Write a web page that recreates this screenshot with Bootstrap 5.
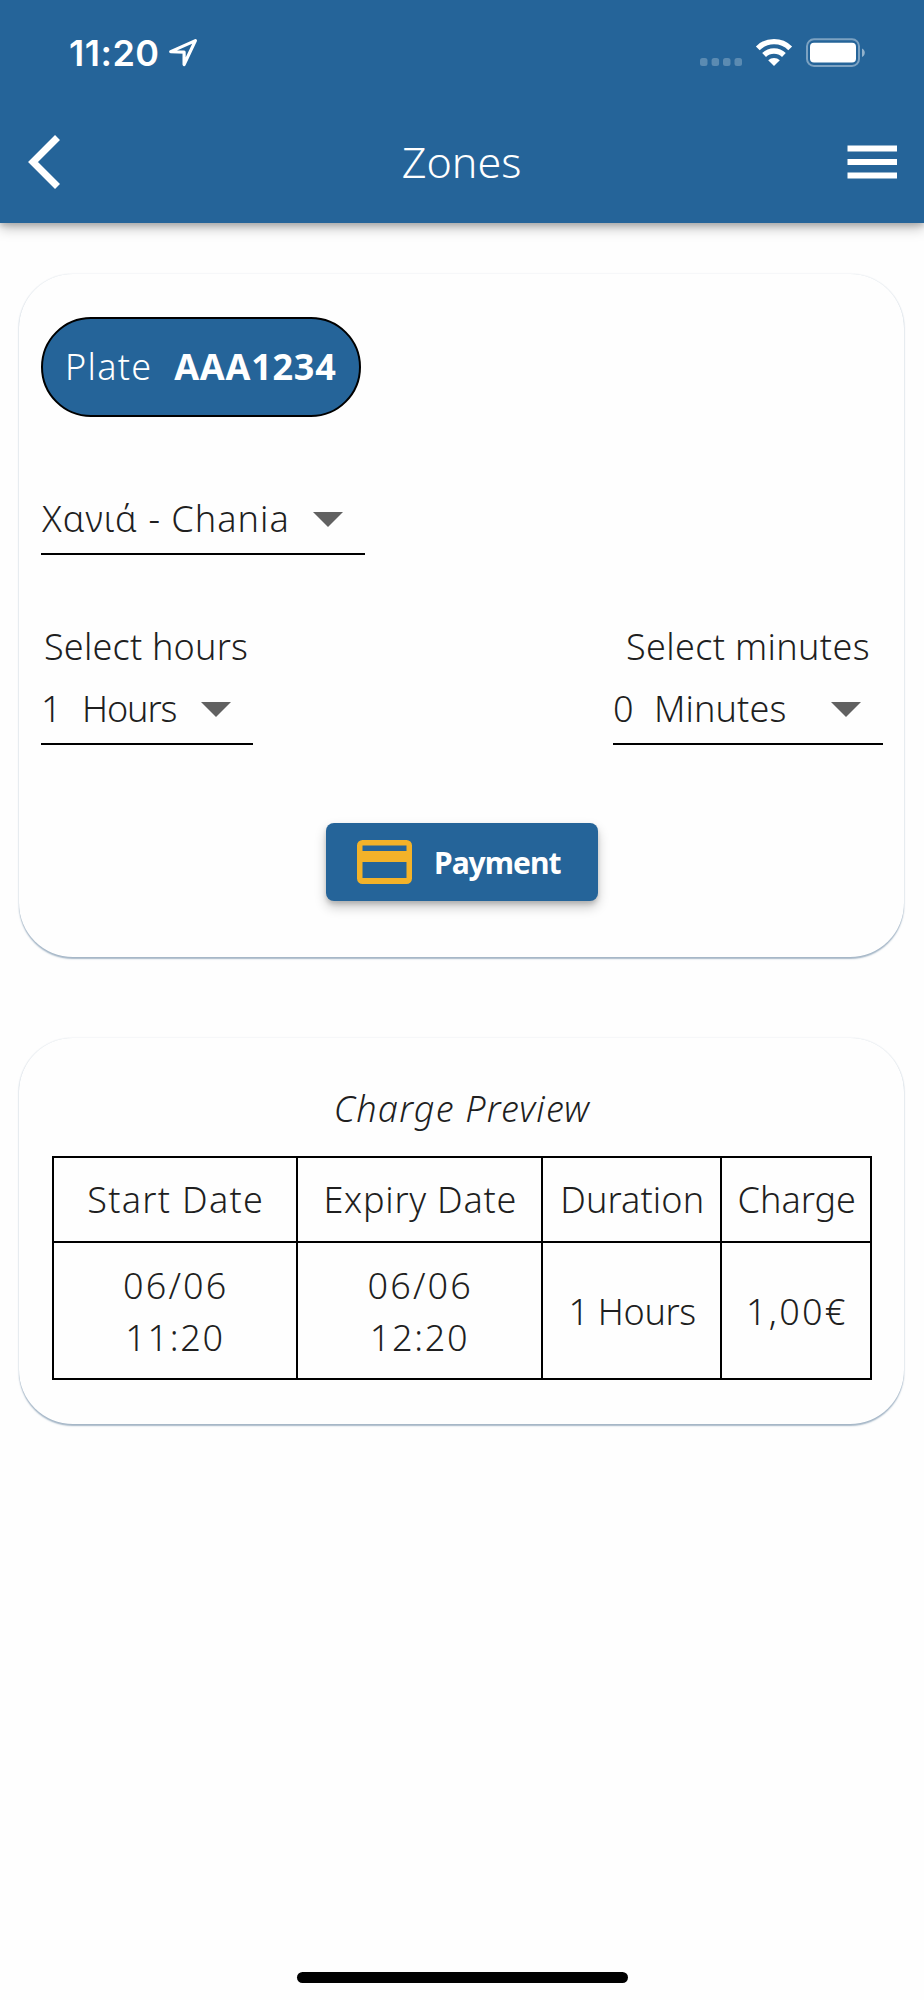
<!DOCTYPE html>
<html lang="en">
<head>
<meta charset="utf-8">
<meta name="viewport" content="width=device-width, initial-scale=1">
<title>Zones</title>
<link rel="stylesheet" href="https://cdn.jsdelivr.net/npm/bootstrap@5.3.0/dist/css/bootstrap.min.css">
<style>
  :root { --brand: #256499; --ink: #1f1f1f; }
  body { font-family: "Noto Sans", sans-serif; font-weight: 330; font-size: 36px; line-height: 52px; color: var(--ink); background: #fefefe; }
  .screen { height: 2000px; overflow: hidden; }
  svg { display: block; flex: none; }

  .app-head { height: 222.5px; background: var(--brand); color: #fff; box-shadow: 0 5px 12px rgba(0,0,0,.26), 0 3px 5px rgba(0,0,0,.14); }
  .status-bar { height: 106px; padding: 0 59px 0 69px; }
  .clock { font: 600 36px/52px Inter, sans-serif; letter-spacing: .5px; }
  .title-bar { height: 112px; padding: 0 27px 0 28px; }
  .page-title { font-size: 43px; line-height: 60px; font-weight: 330; margin: 0 2px 1px 0; }

  .panel { margin: 0 20px 0 19px; padding: 43px 21px 0 22px; border: 0; border-radius: 54px; background: #fefefe; box-shadow: 0 1.5px 1.5px rgba(37,80,120,.4), 0 0 1.5px rgba(37,80,120,.15); }
  .panel-form { height: 683px; margin-top: 51.5px; }
  .panel-preview { height: 386px; margin-top: 81px; padding-top: 45px; }

  .plate { width: 320px; height: 100px; border: 2px solid #000; border-radius: 50px; background: var(--brand); color: #fff; padding: 0 22px; }
  .plate span { letter-spacing: 1.3px; }
  .plate strong { font-weight: 700; letter-spacing: .75px; margin-left: auto; margin-right: .5px; }

  .picker { height: 64px; border-bottom: 2px solid #000; padding-top: 2px; padding-right: 22px; }
  .picker svg { margin: 19px 0 0 auto; }
  .picker-zone { width: 324px; margin-top: 74px; padding-left: 1px; letter-spacing: 1px; }
  .time-row { margin-top: 66px; }
  .picker-hours { width: 212px; margin-top: 8px; }
  .picker-minutes { width: 270px; margin-top: 8px; }
  .num { width: 41px; }
  .label-hours { padding-left: 3px; letter-spacing: .2px; }
  .label-minutes { padding-left: 13px; letter-spacing: .35px; }
  .unit-hours { letter-spacing: -1.1px; }
  .unit-minutes { letter-spacing: .1px; }

  .pay { width: 272px; height: 78px; margin-top: 78px; border: 0; border-radius: 8px; background: var(--brand) !important; color: #fff !important; padding: 0 0 0 31px; font-size: 30px; font-weight: 700; letter-spacing: -1px; box-shadow: 0 6px 12px rgba(0,0,0,.22), 0 3px 4px rgba(0,0,0,.14); }
  .pay span { margin-left: 22px; }

  .preview-title { font-size: 36px; line-height: 52px; font-weight: 330; font-style: italic; letter-spacing: 1.2px; margin: 0 0 21px; }
  .charges { width: 820px; margin: 0 0 0 11px; table-layout: fixed; border-collapse: collapse; text-align: center; }
  .charges th, .charges td { border: 2px solid #000; font-weight: 330; padding: 16px 0 15px; }
  .charges td { padding: 17px 0 14px; }
  .c-date { width: 244px; } .c-expiry { width: 245px; } .c-dur { width: 179px; } .c-charge { width: 150px; }
  .s-start { letter-spacing: 1.3px; } .s-exp { letter-spacing: .74px; } .s-dur { letter-spacing: .1px; }
  .s-date { letter-spacing: 2.2px; } .s-time { letter-spacing: 1.7px; } .s-hrs { letter-spacing: -.35px; }
  .charges th, .charges td { text-indent: 1.5px; }

  .home-bar { width: 331px; height: 11px; border-radius: 6px; background: #000; margin-bottom: 17px; }
</style>
</head>
<body>
<div class="screen d-flex flex-column">
  <header class="app-head flex-shrink-0">
    <div class="status-bar d-flex align-items-center">
      <span class="clock">11:20</span>
      <svg class="ms-2" width="32" height="30" viewBox="1.500 0 32 30" fill="none" stroke="#fff" stroke-width="3.200" stroke-linejoin="round"><path d="M28.900 2.600 17.600 26.500V14.200L4.200 13.600Z"/></svg>
      <svg class="ms-auto" width="165" height="30" viewBox="0 0 165 30">
        <g fill="#fff" fill-opacity=".25"><rect x="0" y="20" width="7.500" height="8" rx="2.500"/><rect x="11.600" y="20" width="7.500" height="8" rx="2.500"/><rect x="23" y="20" width="7.500" height="8" rx="2.500"/><rect x="34.500" y="20" width="7.500" height="8" rx="2.500"/></g>
        <g fill="none" stroke="#fff" stroke-width="5.400"><path d="M57.800 10.300a23 23 0 0 1 32.400 0"/><path d="M64.100 17a14.200 14.200 0 0 1 19.800 0"/></g>
        <path d="M68.200 22.200a8.600 8.600 0 0 1 11.600 0L74 28z" fill="#fff"/>
        <rect x="107" y="1.300" width="52" height="26.600" rx="7" fill="none" stroke="#fff" stroke-opacity=".4" stroke-width="2"/>
        <rect x="110" y="4.700" width="46" height="19.800" rx="4" fill="#fff"/>
        <path d="M162 10.500c3.700 1.400 3.700 7 0 8.400z" fill="#fff" fill-opacity=".5"/>
      </svg>
    </div>
    <nav class="title-bar d-flex align-items-center justify-content-between" aria-label="Main">
      <svg width="50" height="56" viewBox="0 0 50 56" fill="none" stroke="#fff" stroke-width="7"><path d="M29.500 3.500 5 28 29.500 52.500"/></svg>
      <h1 class="page-title">Zones</h1>
      <svg width="50" height="34" viewBox="0 0 50 34" fill="#fff"><path d="M.5.500h49.500v6H.5zM.5 14h49.500v6H.5zM.5 27.500h49.500v6H.5z"/></svg>
    </nav>
  </header>

  <main>
    <section class="card panel panel-form">
      <div class="plate d-flex align-items-center"><span>Plate</span><strong>AAA1234</strong></div>
      <div class="picker picker-zone d-flex align-items-start">Χανιά - Chania
        <svg width="30" height="15" viewBox="0 0 30 15" fill="#616161"><path d="M0 0h30L15 15z"/></svg>
      </div>
      <div class="time-row d-flex justify-content-between">
        <div>
          <div class="label-hours">Select hours</div>
          <div class="picker picker-hours d-flex align-items-start"><span class="num">1</span><span class="unit-hours">Hours</span>
            <svg width="30" height="15" viewBox="0 0 30 15" fill="#616161"><path d="M0 0h30L15 15z"/></svg>
          </div>
        </div>
        <div>
          <div class="label-minutes">Select minutes</div>
          <div class="picker picker-minutes d-flex align-items-start"><span class="num">0</span><span class="unit-minutes">Minutes</span>
            <svg width="30" height="15" viewBox="0 0 30 15" fill="#616161"><path d="M0 0h30L15 15z"/></svg>
          </div>
        </div>
      </div>
      <button type="button" class="btn pay d-flex align-items-center mx-auto">
        <svg width="55" height="44" viewBox="0 0 55 44"><path fill="#f3b229" fill-rule="evenodd" d="M5.500 0h44a5.500 5.500 0 0 1 5.500 5.500v33a5.500 5.500 0 0 1-5.500 5.500h-44A5.500 5.500 0 0 1 0 38.500v-33A5.500 5.500 0 0 1 5.500 0zM5.500 5.500V11h44V5.500zM5.500 22v16h44V22z"/></svg>
        <span>Payment</span>
      </button>
    </section>

    <section class="card panel panel-preview">
      <h2 class="preview-title text-center">Charge Preview</h2>
      <table class="charges">
        <colgroup><col class="c-date"><col class="c-expiry"><col class="c-dur"><col class="c-charge"></colgroup>
        <thead>
          <tr><th class="s-start">Start Date</th><th class="s-exp">Expiry Date</th><th class="s-dur">Duration</th><th>Charge</th></tr>
        </thead>
        <tbody>
          <tr>
            <td><span class="s-date">06/06</span><br><span class="s-time">11:20</span></td>
            <td><span class="s-date">06/06</span><br><span class="s-time">12:20</span></td>
            <td class="s-hrs">1 Hours</td>
            <td class="s-date">1,00€</td>
          </tr>
        </tbody>
      </table>
    </section>
  </main>

  <div class="home-bar mt-auto mx-auto"></div>
</div>
<script src="https://cdn.jsdelivr.net/npm/bootstrap@5.3.0/dist/js/bootstrap.bundle.min.js"></script>
</body>
</html>
